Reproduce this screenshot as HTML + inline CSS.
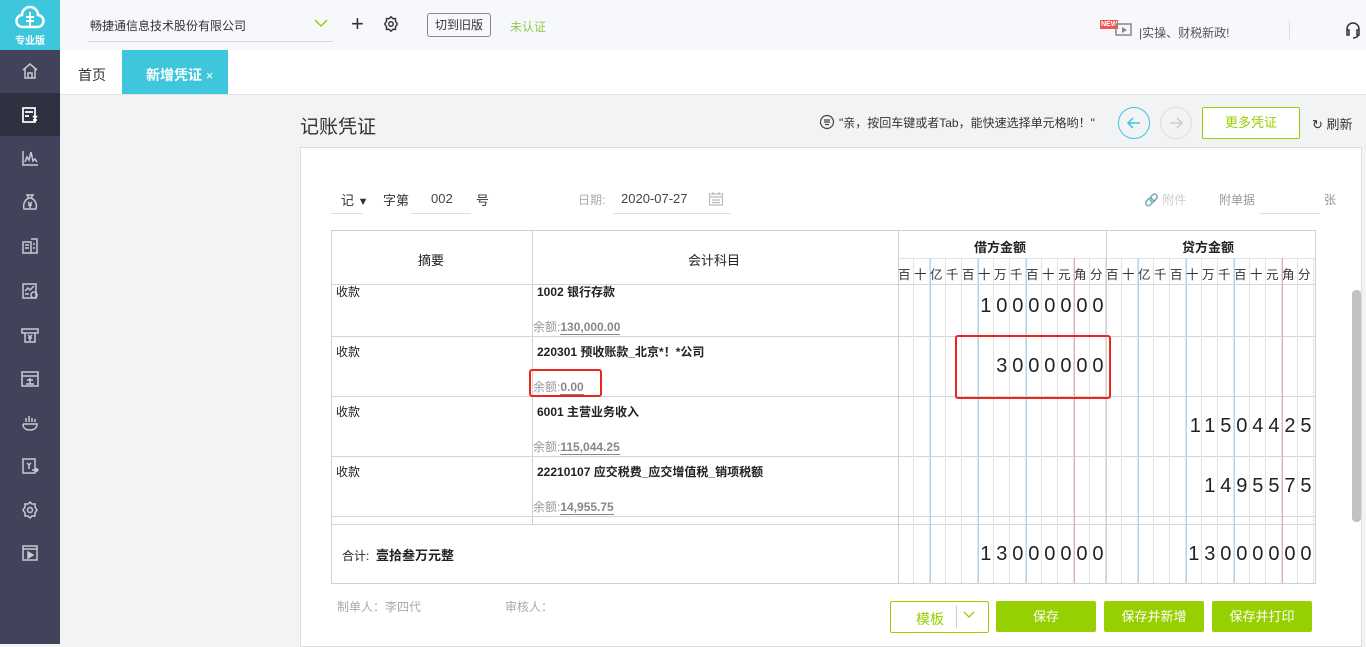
<!DOCTYPE html>
<html><head><meta charset="utf-8"><style>
*{margin:0;padding:0;box-sizing:border-box}
body{width:1366px;height:644px;overflow:hidden;background:#f2f3f5;font-family:"Liberation Sans","Noto Sans CJK SC",sans-serif;font-size:12px;color:#333;position:relative}
.a{position:absolute}
.side{left:0;top:0;width:60px;height:644px;background:#42435a}
.t{white-space:nowrap}
.btn{position:absolute;background:#96d000;color:#fff;text-align:center;font-size:13px;border-radius:2px;line-height:31px;height:31px;top:601px}
.v{position:absolute;width:1px}
.h{position:absolute;height:1px;background:#d5d5d5}
.dg{position:absolute;font-size:20px;letter-spacing:4.9px;color:#222;text-align:right}
</style></head><body>
<!-- sidebar -->
<div class="a side"></div>
<div class="a" style="left:0;top:0;width:60px;height:50px;background:#3ec6dd"></div>
<svg class="a" style="left:15px;top:5px" width="30" height="26" viewBox="0 0 30 26"><path d="M8 22a6 6 0 0 1-1-12 8 8 0 0 1 16 0 6 6 0 0 1-1 12z" fill="none" stroke="#fff" stroke-width="2.5"/><path d="M15 7v15M11 12h8M11 16h8" stroke="#fff" stroke-width="2"/></svg>
<div class="a t" style="left:15px;top:32px;color:#fff;font-size:10px;font-weight:bold">专业版</div>
<div class="a" style="left:0;top:93px;width:60px;height:43px;background:#2f3040"></div>
<svg class="a" style="left:20px;top:61px" width="20" height="20" viewBox="0 0 20 20" fill="none" stroke="#c8c9d2" stroke-width="1.5"><path d="M3 9l7-6 7 6M5 8v9h10V8M8 17v-5h4v5"/></svg>
<svg class="a" style="left:20px;top:105px" width="20" height="20" viewBox="0 0 20 20" fill="none" stroke="#fff" stroke-width="1.7"><rect x="3" y="3" width="12" height="14"/><path d="M5 7h8M5 11h4M13 11l2 2 2-2M15 13v4M13 15h4"/></svg>
<svg class="a" style="left:20px;top:148px" width="20" height="20" viewBox="0 0 20 20" fill="none" stroke="#c8c9d2" stroke-width="1.5"><path d="M3 3v14h15M5 14l2-5 2 3 2-8 2 9 2-2 2 3"/></svg>
<svg class="a" style="left:20px;top:192px" width="20" height="20" viewBox="0 0 20 20" fill="none" stroke="#c8c9d2" stroke-width="1.5"><path d="M7 3h6l-2 3h-2zM9 6C4 8 3 13 4 17h12c1-4 0-9-5-11M8 10l2 2 2-2M10 12v4M8 13h4"/></svg>
<svg class="a" style="left:20px;top:236px" width="20" height="20" viewBox="0 0 20 20" fill="none" stroke="#c8c9d2" stroke-width="1.5"><rect x="3" y="6" width="8" height="11"/><path d="M11 3h6v14h-6M5 9h4M5 12h4M13 8h2M13 12h2"/></svg>
<svg class="a" style="left:20px;top:281px" width="20" height="20" viewBox="0 0 20 20" fill="none" stroke="#c8c9d2" stroke-width="1.5"><rect x="3" y="3" width="13" height="14"/><path d="M5 10l3-3 2 2 4-4M5 13h4"/><circle cx="14" cy="14" r="3"/></svg>
<svg class="a" style="left:20px;top:325px" width="20" height="20" viewBox="0 0 20 20" fill="none" stroke="#c8c9d2" stroke-width="1.5"><path d="M2 4h16v4H2zM5 8v9h10V8M8 10l2 2 2-2M10 12v4M8 13h4"/></svg>
<svg class="a" style="left:20px;top:369px" width="20" height="20" viewBox="0 0 20 20" fill="none" stroke="#c8c9d2" stroke-width="1.5"><rect x="2" y="3" width="16" height="14"/><path d="M2 7h16M6 15h8M10 9v6M7 11h6"/></svg>
<svg class="a" style="left:20px;top:413px" width="20" height="20" viewBox="0 0 20 20" fill="none" stroke="#c8c9d2" stroke-width="1.5"><path d="M3 11h14c0 4-3 6-7 6s-7-2-7-6M6 9V5M9 9V3M12 9V5M15 9V6"/></svg>
<svg class="a" style="left:20px;top:456px" width="20" height="20" viewBox="0 0 20 20" fill="none" stroke="#c8c9d2" stroke-width="1.5"><rect x="3" y="3" width="12" height="14"/><path d="M7 7l2 2 2-2M9 9v4M12 14h6M16 12l2 2-2 2"/></svg>
<svg class="a" style="left:20px;top:500px" width="20" height="20" viewBox="0 0 20 20" fill="none" stroke="#c8c9d2" stroke-width="1.5"><path d="M10 2l2 2h3v3l2 3-2 3v3h-3l-2 2-2-2H5v-3l-2-3 2-3V4h3z"/><circle cx="10" cy="10" r="2.5"/></svg>
<svg class="a" style="left:20px;top:543px" width="20" height="20" viewBox="0 0 20 20" fill="none" stroke="#c8c9d2" stroke-width="1.5"><rect x="3" y="3" width="14" height="14"/><path d="M3 6h14"/><path d="M8 9l5 3-5 3z" fill="#c8c9d2"/></svg>

<!-- header -->
<div class="a" style="left:60px;top:0;width:1306px;height:50px;background:#f7f8fb"></div>
<div class="a t" style="left:90px;top:17px;font-size:12px;color:#333">畅捷通信息技术股份有限公司</div>
<div class="a" style="left:88px;top:41px;width:245px;height:1px;background:#d8d8d8"></div>
<svg class="a" style="left:314px;top:18px" width="14" height="10"><path d="M1 2l6 6 6-6" fill="none" stroke="#96d000" stroke-width="1.5"/></svg>
<div class="a t" style="left:351px;top:11px;font-size:22px;color:#333;line-height:26px">+</div>
<svg class="a" style="left:382px;top:15px" width="18" height="18" viewBox="0 0 20 20" fill="none" stroke="#333" stroke-width="1.6"><path d="M10 2l2 2h3v3l2 3-2 3v3h-3l-2 2-2-2H5v-3l-2-3 2-3V4h3z"/><circle cx="10" cy="10" r="2.5"/></svg>
<div class="a t" style="left:427px;top:13px;width:64px;height:24px;border:1px solid #888;border-radius:3px;text-align:center;line-height:22px;font-size:12px;color:#333">切到旧版</div>
<div class="a t" style="left:510px;top:18px;color:#96c94a;font-size:12px">未认证</div>
<div class="a t" style="left:1100px;top:20px;background:#f0574f;color:#fff;font-size:7px;font-weight:bold;padding:0 1px;line-height:9px">NEW</div>
<svg class="a" style="left:1114px;top:21px" width="20" height="16"><rect x="2" y="3" width="15" height="11" fill="none" stroke="#888" stroke-width="1.5"/><path d="M8 6l5 3-5 3z" fill="#888"/></svg>
<div class="a t" style="left:1139px;top:24px;color:#555;font-size:12px">|实操、财税新政!</div>
<div class="a" style="left:1289px;top:21px;width:1px;height:18px;background:#ddd"></div>
<svg class="a" style="left:1345px;top:21px" width="16" height="18" viewBox="0 0 16 18" fill="none" stroke="#333" stroke-width="1.5"><path d="M2 10V8a6 6 0 0 1 12 0v2M2 9h2v5H2zM12 9h2v5h-2zM13 14c0 2-3 3-5 3"/></svg>

<!-- tabs -->
<div class="a" style="left:60px;top:50px;width:1306px;height:44px;background:#fff"></div>
<div class="a t" style="left:78px;top:65px;font-size:14px;color:#333">首页</div>
<div class="a" style="left:122px;top:50px;width:106px;height:44px;background:#3ec6dd"></div>
<div class="a t" style="left:146px;top:65px;font-size:14px;color:#fff;font-weight:bold">新增凭证 <span style="font-weight:normal;font-size:13px">×</span></div>
<div class="a" style="left:60px;top:94px;width:1306px;height:1px;background:#e6e6e6"></div>

<!-- toolbar -->
<div class="a t" style="left:300px;top:112px;font-size:19px;color:#333">记账凭证</div>
<svg class="a" style="left:819px;top:114px" width="16" height="16" viewBox="0 0 16 16" fill="none" stroke="#444" stroke-width="1.2"><circle cx="8" cy="8" r="6.5"/><path d="M5 6h6M5 8h6M6 10.5h4"/></svg>
<div class="a t" style="left:839px;top:114px;font-size:12px;color:#333">"亲，按回车键或者Tab，能快速选择单元格哟！"</div>
<div class="a" style="left:1118px;top:107px;width:32px;height:32px;border:1px solid #3ec6dd;border-radius:50%"></div>
<svg class="a" style="left:1125px;top:114px" width="18" height="18"><path d="M15 9H3M8 4L3 9l5 5" fill="none" stroke="#3ec6dd" stroke-width="1.5"/></svg>
<div class="a" style="left:1160px;top:107px;width:32px;height:32px;border:1px solid #ddd;border-radius:50%"></div>
<svg class="a" style="left:1167px;top:114px" width="18" height="18"><path d="M3 9h12M10 4l5 5-5 5" fill="none" stroke="#ccc" stroke-width="1.5"/></svg>
<div class="a t" style="left:1202px;top:107px;width:98px;height:32px;border:1px solid #96d000;border-radius:2px;background:#fff;text-align:center;line-height:30px;color:#96d000;font-size:13px">更多凭证</div>
<div class="a t" style="left:1312px;top:114px;font-size:13px;color:#333">↻ 刷新</div>

<!-- card -->
<div class="a" style="left:300px;top:147px;width:1062px;height:500px;background:#fff;border:1px solid #ddd"></div>
<div class="a" style="left:1352px;top:290px;width:9px;height:232px;background:#c1c1c1;border-radius:4px"></div>

<div class="a t" style="left:341px;top:190px;font-size:13px">记 <span style="font-size:11px">▼</span></div>
<div class="a" style="left:331px;top:213px;width:32px;height:1px;background:#ddd"></div>
<div class="a t" style="left:383px;top:190px;font-size:13px">字第</div>
<div class="a t" style="left:431px;top:191px;font-size:13px;color:#444">002</div>
<div class="a" style="left:411px;top:213px;width:60px;height:1px;background:#ddd"></div>
<div class="a t" style="left:476px;top:190px;font-size:13px">号</div>
<div class="a t" style="left:578px;top:191px;font-size:12px;color:#aaa">日期:</div>
<div class="a t" style="left:621px;top:191px;font-size:13px;color:#444">2020-07-27</div>
<svg class="a" style="left:708px;top:191px" width="16" height="16" fill="none" stroke="#bbb" stroke-width="1.2"><rect x="1.5" y="3" width="13" height="11"/><path d="M1.5 6h13M5 1v3M11 1v3M4 9h8M4 11.5h8"/></svg>
<div class="a" style="left:613px;top:213px;width:118px;height:1px;background:#ddd"></div>
<div class="a t" style="left:1144px;top:191px;font-size:12px;color:#ccc">🔗 附件</div>
<div class="a t" style="left:1219px;top:191px;font-size:12px;color:#999">附单据</div>
<div class="a" style="left:1260px;top:213px;width:60px;height:1px;background:#ddd"></div>
<div class="a t" style="left:1324px;top:191px;font-size:12px;color:#999">张</div>

<!-- table outer -->
<div class="a" style="left:331px;top:230px;width:985px;height:354px;border:1px solid #d0d0d0;background:#fff"></div>
<div class="h" style="left:898px;top:258px;width:417px;background:#e2e2e2"></div>
<div class="h" style="left:331px;top:284px;width:985px"></div>
<div class="h" style="left:331px;top:336px;width:985px"></div>
<div class="h" style="left:331px;top:396px;width:985px"></div>
<div class="h" style="left:331px;top:456px;width:985px"></div>
<div class="h" style="left:331px;top:516px;width:985px"></div>
<div class="h" style="left:331px;top:524px;width:985px"></div>
<div class="v" style="left:532px;top:231px;height:293px;background:#d0d0d0"></div>
<div class="v" style="left:898px;top:231px;height:352px;background:#d0d0d0"></div>
<!-- digit grid -->
<div class="a" style="left:898px;top:258px;width:208px;height:325px;background:repeating-linear-gradient(90deg,transparent 0 15px,#e3e3e3 15px 16px)"></div>
<div class="a" style="left:1106px;top:258px;width:208px;height:325px;background:repeating-linear-gradient(90deg,transparent 0 15px,#e3e3e3 15px 16px)"></div>
<div class="v" style="left:930px;top:258px;height:325px;background:#a8d8f2"></div>
<div class="v" style="left:978px;top:258px;height:325px;background:#a8d8f2"></div>
<div class="v" style="left:1026px;top:258px;height:325px;background:#a8d8f2"></div>
<div class="v" style="left:1074px;top:258px;height:325px;background:#f2a8a8"></div>
<div class="v" style="left:1138px;top:258px;height:325px;background:#a8d8f2"></div>
<div class="v" style="left:1186px;top:258px;height:325px;background:#a8d8f2"></div>
<div class="v" style="left:1234px;top:258px;height:325px;background:#a8d8f2"></div>
<div class="v" style="left:1282px;top:258px;height:325px;background:#f2a8a8"></div>
<div class="v" style="left:1106px;top:231px;height:352px;background:#d0d0d0"></div>

<div class="a t" style="left:418px;top:250px;font-size:13px;color:#222">摘要</div>
<div class="a t" style="left:688px;top:250px;font-size:13px;color:#222">会计科目</div>
<div class="a t" style="left:974px;top:237px;font-size:13px;font-weight:bold;color:#222">借方金额</div>
<div class="a t" style="left:1182px;top:237px;font-size:13px;font-weight:bold;color:#222">贷方金额</div>
<div class="a t" style="left:898px;top:264px;font-size:12.5px;color:#333;letter-spacing:3.5px">百十亿千百十万千百十元角分百十亿千百十万千百十元角分</div>

<!-- rows -->
<div class="a t" style="left:336px;top:283px;font-size:12px;color:#222">收款</div>
<div class="a t" style="left:537px;top:283px;font-size:12px;font-weight:bold;color:#222">1002 银行存款</div>
<div class="a t" style="left:533px;top:318px;font-size:12px;color:#999">余额:<b style="color:#888;border-bottom:1px solid #888">130,000.00</b></div>
<div class="a t" style="left:336px;top:343px;font-size:12px;color:#222">收款</div>
<div class="a t" style="left:537px;top:343px;font-size:12px;font-weight:bold;color:#222">220301 预收账款_北京*！*公司</div>
<div class="a t" style="left:533px;top:378px;font-size:12px;color:#999">余额:<b style="color:#888;border-bottom:1px solid #888">0.00</b></div>
<div class="a t" style="left:336px;top:403px;font-size:12px;color:#222">收款</div>
<div class="a t" style="left:537px;top:403px;font-size:12px;font-weight:bold;color:#222">6001 主营业务收入</div>
<div class="a t" style="left:533px;top:438px;font-size:12px;color:#999">余额:<b style="color:#888;border-bottom:1px solid #888">115,044.25</b></div>
<div class="a t" style="left:336px;top:463px;font-size:12px;color:#222">收款</div>
<div class="a t" style="left:537px;top:463px;font-size:12px;font-weight:bold;color:#222">22210107 应交税费_应交增值税_销项税额</div>
<div class="a t" style="left:533px;top:498px;font-size:12px;color:#999">余额:<b style="color:#888;border-bottom:1px solid #888">14,955.75</b></div>
<div class="a t" style="left:342px;top:545px;font-size:12px;color:#222">合计:&nbsp; <b style="font-size:13px">壹拾叁万元整</b></div>

<div class="dg t" style="right:257.6px;top:295px">10000000</div>
<div class="dg t" style="right:257.6px;top:355px">3000000</div>
<div class="dg t" style="right:49.6px;top:415px">11504425</div>
<div class="dg t" style="right:49.6px;top:475px">1495575</div>
<div class="dg t" style="right:257.6px;top:543px">13000000</div>
<div class="dg t" style="right:49.6px;top:543px">13000000</div>

<!-- red boxes -->
<div class="a" style="left:955px;top:335px;width:156px;height:64px;border:2px solid #e8261c;border-radius:3px"></div>
<div class="a" style="left:529px;top:369px;width:73px;height:28px;border:2px solid #e8261c;border-radius:3px"></div>

<!-- footer -->
<div class="a t" style="left:337px;top:598px;font-size:12px;color:#aaa">制单人：李四代</div>
<div class="a t" style="left:505px;top:598px;font-size:12px;color:#aaa">审核人：</div>
<div class="a" style="left:890px;top:601px;width:99px;height:32px;border:1px solid #96d000;border-radius:2px;background:#fff"></div>
<div class="a t" style="left:916px;top:609px;font-size:14px;color:#96d000">模板</div>
<div class="a" style="left:956px;top:606px;width:1px;height:22px;background:#ccc"></div>
<svg class="a" style="left:963px;top:611px" width="12" height="8"><path d="M1 1l5 5 5-5" fill="none" stroke="#96d000" stroke-width="1.3"/></svg>
<div class="btn" style="left:996px;width:100px">保存</div>
<div class="btn" style="left:1104px;width:100px">保存并新增</div>
<div class="btn" style="left:1212px;width:100px">保存并打印</div>
</body></html>
